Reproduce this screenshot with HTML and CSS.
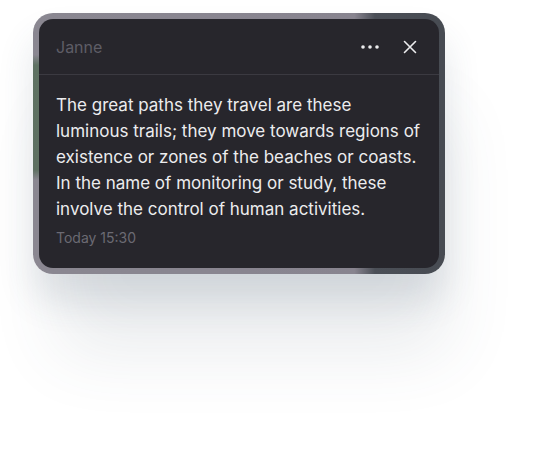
FILE: index.html
```html
<!DOCTYPE html>
<html lang="en">
<head>
  <meta charset="UTF-8"/>
  <title>Message</title>
  <link rel="stylesheet" href="styles.css">
</head>
<body>
  <div class="stage">
    <div class="frame">
      <div class="card">
        <div class="card-head">
          <span class="author">Janne</span>
          <div class="actions">
            <button class="icon-btn" aria-label="More">
              <svg width="18" height="6" viewBox="0 0 18 6">
                <circle cx="2" cy="3" r="1.8"/>
                <circle cx="9" cy="3" r="1.8"/>
                <circle cx="16" cy="3" r="1.8"/>
              </svg>
            </button>
            <button class="icon-btn" aria-label="Close">
              <svg width="14" height="14" viewBox="0 0 14 14">
                <path d="M1.5 1.5 L12.5 12.5 M12.5 1.5 L1.5 12.5"/>
              </svg>
            </button>
          </div>
        </div>
        <div class="card-body">
          <p class="message">The great paths they travel are these luminous trails; they move towards regions of existence or zones of the beaches or coasts. In the name of monitoring or study, these involve the control of human activities.</p>
          <div class="time">Today 15:30</div>
        </div>
      </div>
    </div>
  </div>
</body>
</html>
```

FILE: styles.css
```css
* { box-sizing: border-box; margin: 0; padding: 0; }
html, body { height: 100%; }
body {
  font-family: Inter, "Noto Sans", sans-serif;
  background: #fff;
}
.stage {
  min-height: 452px;
  padding: 13px 0 0 33px;
}
.frame {
  width: 412px;
  height: 261px;
  padding: 6px;
  border-radius: 20px;
  background:
    linear-gradient(180deg, transparent 16%, #5f7263 20%, #5e7062 60%, transparent 64%) left / 7px 100% no-repeat,
    linear-gradient(90deg, #8a8791 0%, #88848f 78%, #4b4f57 83%, #474b52 100%);
  box-shadow:
    14px 90px 70px -12px rgba(60, 80, 100, 0.11),
    0 26px 36px rgba(60, 80, 100, 0.14);
}
.card {
  height: 100%;
  background: #27262c;
  border-radius: 14px;
  display: flex;
  flex-direction: column;
}
.card-head {
  height: 56px;
  padding: 0 22px 0 17px;
  display: flex;
  align-items: center;
  justify-content: space-between;
  border-bottom: 1px solid #3b3a41;
}
.author {
  color: #5e5d66;
  font-size: 16px;
}
.actions {
  display: flex;
  align-items: center;
  gap: 24px;
}
.icon-btn {
  background: none;
  border: none;
  display: flex;
  cursor: pointer;
}
.icon-btn circle { fill: #ececee; }
.icon-btn path {
  stroke: #ececee;
  stroke-width: 1.6;
  fill: none;
  stroke-linecap: round;
}
.card-body {
  padding: 17px 17px 0 17px;
}
.message {
  color: #ececee;
  font-size: 17px;
  line-height: 26px;
}
.time {
  margin-top: 6px;
  color: #6b6a73;
  font-size: 14px;
  line-height: 20px;
}
```
